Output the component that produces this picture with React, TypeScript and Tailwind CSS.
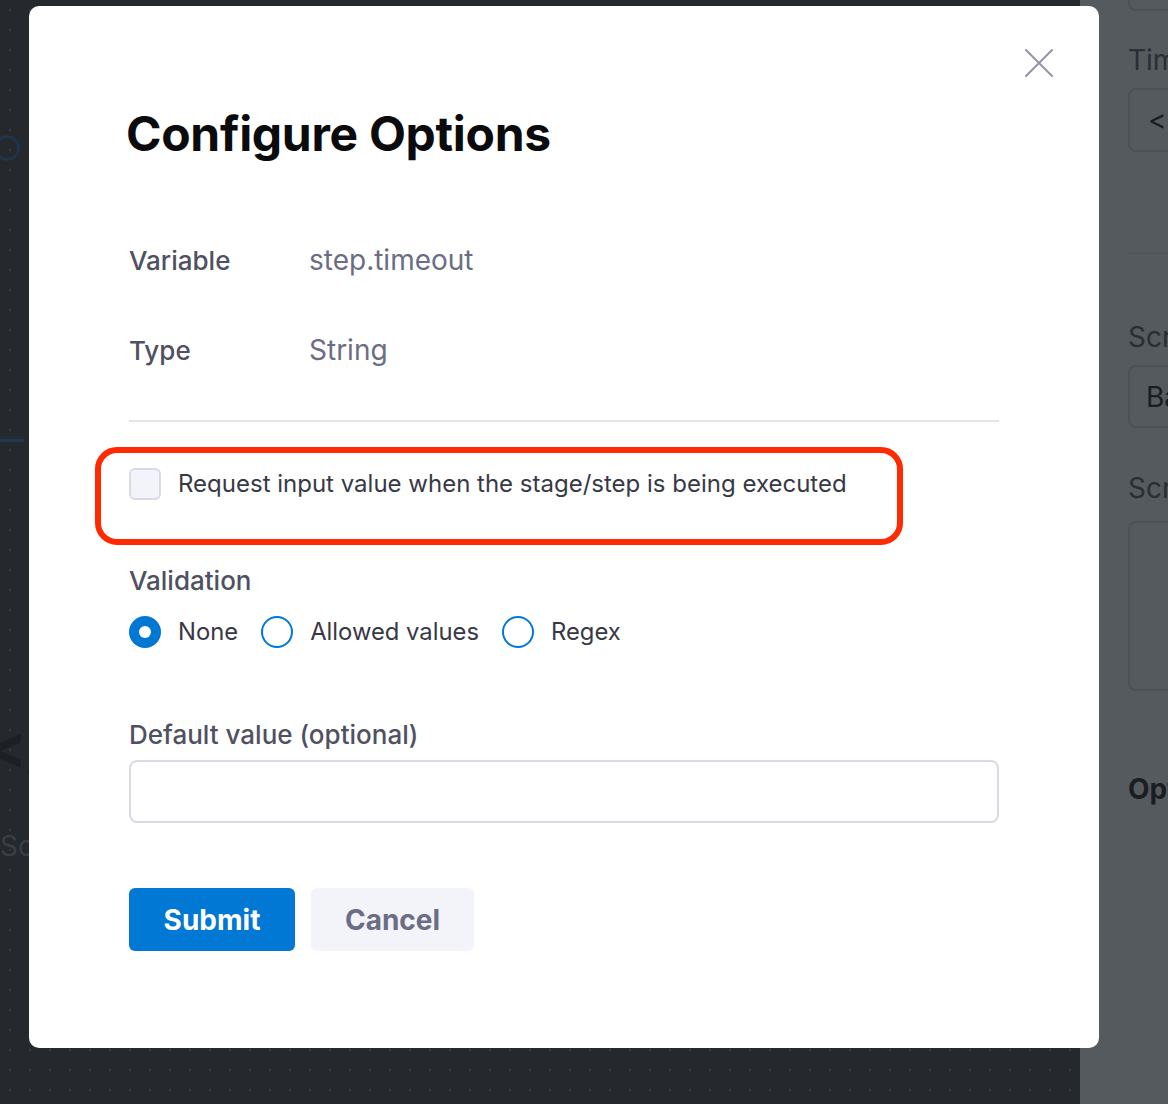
export default function App() {
  return (
    <div className="relative flex h-[1104px] w-[1168px] overflow-hidden font-['Inter',sans-serif]">
      {/* page behind the modal */}
      <div className="relative flex-1 bg-[#25292e] bg-[radial-gradient(circle,#343941_1px,transparent_1.5px)] bg-[size:20px_20px]">
        <div className="absolute left-[-6px] top-[135px] h-[26px] w-[26px] rounded-full border-[3px] border-[#1d3449]"></div>
        <div className="absolute left-0 top-[439px] h-[3px] w-[24px] bg-[#1d3a56]"></div>
        <div className="absolute left-[-14px] top-[716px] text-[60px] font-bold leading-none text-[#1c1f23]">&lt;/</div>
        <div className="absolute left-0 top-[832px] text-[28px] leading-none text-[#3a3e45]">Sc</div>
      </div>
      <div className="flex w-[88px] flex-col bg-[#555a5f] pl-[48px] text-[28px] whitespace-nowrap text-[#2a2e34]">
        <div className="-mt-[23px] h-[34px] w-[80px] rounded-[8px] border-2 border-[#4c5157]"></div>
        <div className="mt-[32px] leading-[34px]">Time</div>
        <div className="mt-[11px] flex h-[64px] w-[80px] items-center rounded-[8px] border-2 border-[#4c5157] pl-[18px] text-[#1a1d21]">&lt;+</div>
        <div className="mt-[101px] h-[1px] w-[80px] bg-[#4c5157]"></div>
        <div className="mt-[66px] leading-[34px]">Script</div>
        <div className="mt-[11px] flex h-[63px] w-[80px] items-center rounded-[8px] border-2 border-[#4c5157] pl-[16px] text-[#1a1d21]">Bash</div>
        <div className="mt-[43px] leading-[34px]">Script</div>
        <div className="mt-[16px] h-[170px] w-[80px] rounded-[8px] border-2 border-[#4c5157]"></div>
        <div className="mt-[81px] font-bold leading-[34px] text-[#1a1d21]">Optional</div>
      </div>

      {/* modal */}
      <div className="absolute left-[29px] top-[6px] flex h-[1042px] w-[1070px] flex-col rounded-[10px] bg-white px-[100px] pt-[99px]">
        <button className="absolute right-[45px] top-[42px]">
          <svg width="30" height="30" viewBox="0 0 30 30" fill="none" stroke="#9293ab" strokeWidth="2" strokeLinecap="round">
            <path d="M2 2L28 28M28 2L2 28" />
          </svg>
        </button>

        <h1 className="-ml-[3px] text-[48px] font-bold leading-[58px] tracking-[-0.3px] text-[#0b0b0d]">Configure Options</h1>

        <div className="mt-[81px] flex h-[32px] items-center">
          <span className="w-[180px] text-[26px] font-medium text-[#4f5162]">Variable</span>
          <span className="text-[28px] text-[#6b6d85]">step.timeout</span>
        </div>
        <div className="mt-[58px] flex h-[32px] items-center">
          <span className="w-[180px] text-[26px] font-medium text-[#4f5162]">Type</span>
          <span className="text-[28px] text-[#6b6d85]">String</span>
        </div>

        <div className="mt-[54px] h-[2px] w-full bg-[#e3e3ea]"></div>

        <label className="mt-[44px] flex items-center gap-[17px]">
          <span className="h-[32px] w-[32px] rounded-[6px] border-2 border-[#d9dae5] bg-[#f3f3fa]"></span>
          <span className="text-[24px] text-[#383946]">Request input value when the stage/step is being executed</span>
        </label>

        <div className="mt-[63px] h-[32px] text-[26px] font-medium leading-[32px] text-[#4f5162]">Validation</div>
        <div className="mt-[19px] flex h-[32px] items-center text-[23.8px] text-[#383946]">
          <span className="flex h-[32px] w-[32px] items-center justify-center rounded-full bg-[#0278d5]">
            <span className="h-[12px] w-[12px] rounded-full bg-white"></span>
          </span>
          <span className="ml-[17px]">None</span>
          <span className="ml-[23px] h-[32px] w-[32px] rounded-full border-2 border-[#0278d5]"></span>
          <span className="ml-[17px]">Allowed values</span>
          <span className="ml-[23px] h-[32px] w-[32px] rounded-full border-2 border-[#0278d5]"></span>
          <span className="ml-[17px]">Regex</span>
        </div>

        <div className="mt-[71px] h-[32px] text-[26px] font-medium leading-[32px] text-[#4f5162]">Default value (optional)</div>
        <input className="mt-[9px] h-[63px] w-full rounded-[8px] border-2 border-[#d9dae5] bg-white px-4 text-[24px] outline-none" />

        <div className="mt-[65px] flex gap-[16px]">
          <button className="h-[63px] w-[166px] rounded-[6px] bg-[#0278d5] text-[28px] font-bold text-white">Submit</button>
          <button className="h-[63px] w-[163px] rounded-[6px] bg-[#f3f3fa] text-[28px] font-bold text-[#6b6d85]">Cancel</button>
        </div>

        {/* annotation highlight */}
        <div className="absolute left-[66px] top-[441px] h-[98px] w-[808px] rounded-[22px] border-[6px] border-[#ff2a00]"></div>
      </div>
    </div>
  );
}
